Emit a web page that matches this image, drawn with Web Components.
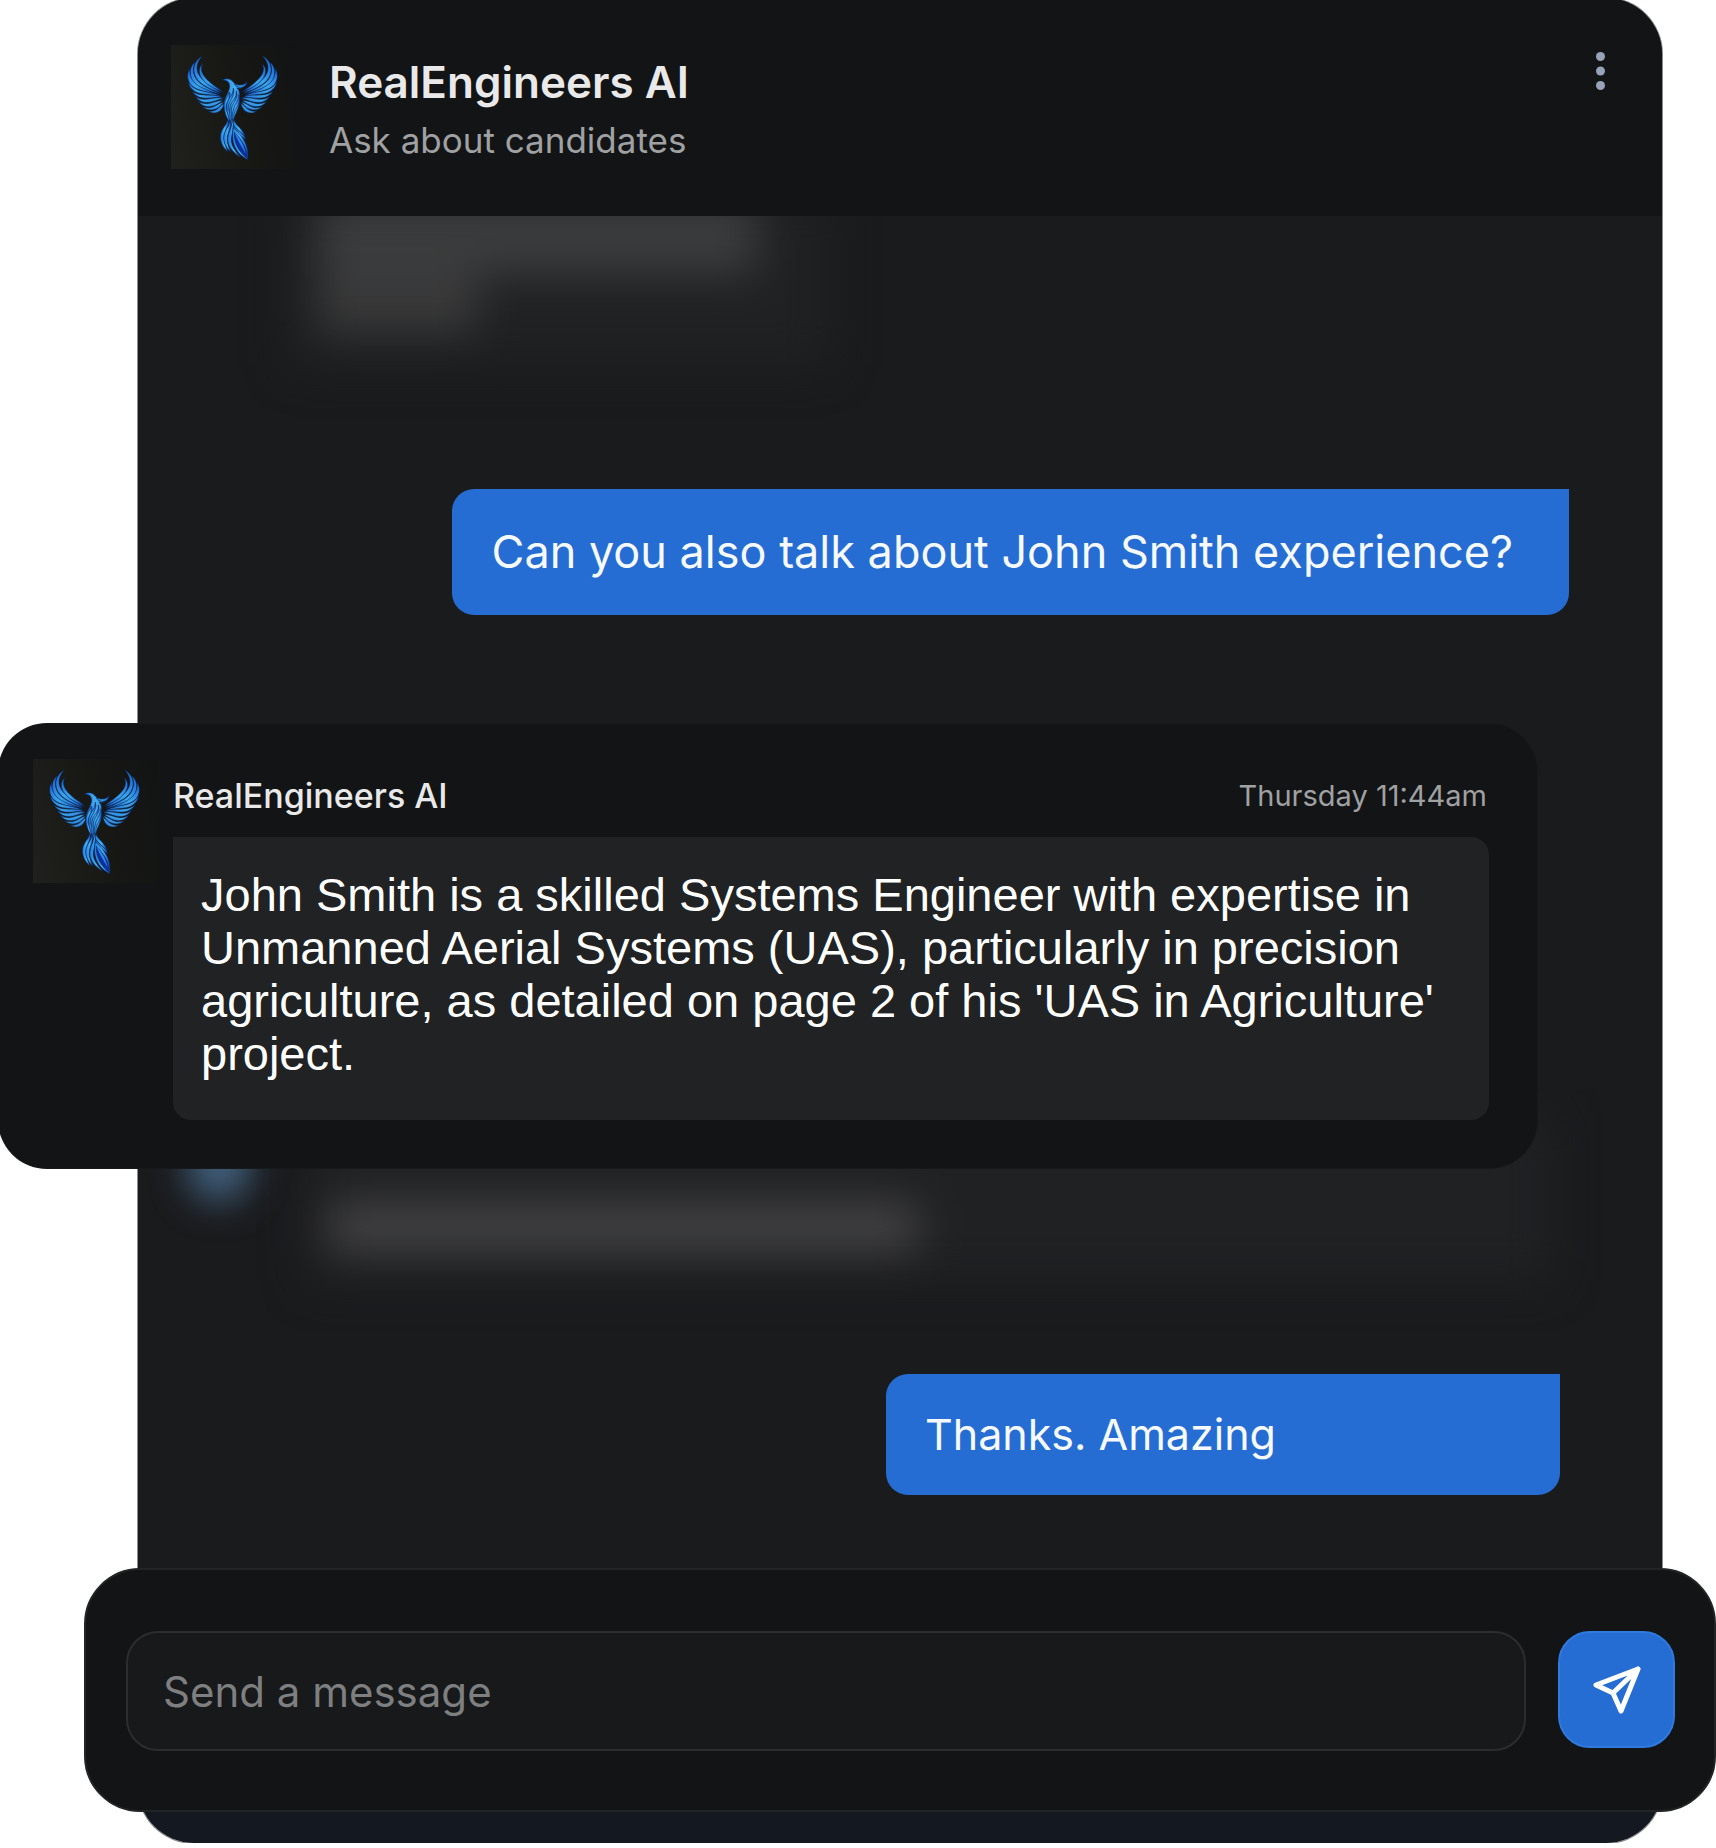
<!DOCTYPE html>
<html lang="en">
<head>
<meta charset="utf-8">
<meta name="viewport" content="width=device-width, initial-scale=1">
<title>RealEngineers AI</title>
<style>
  html { background: #fff; }
  body { margin: 0; font-family: Inter, "Liberation Sans", sans-serif; color: #e9e9ea; overflow-x: hidden; }
</style>
</head>
<body>
<chat-panel>
  <chat-header slot="header" name="RealEngineers AI" tagline="Ask about candidates"></chat-header>
  <blurred-reply></blurred-reply>
  <user-message>Can you also talk about John Smith experience?</user-message>
  <assistant-message name="RealEngineers AI" time="Thursday 11:44am">John Smith is a skilled Systems Engineer with expertise in Unmanned Aerial Systems (UAS), particularly in precision agriculture, as detailed on page 2 of his 'UAS in Agriculture' project.</assistant-message>
  <blurred-reply class="short" compact></blurred-reply>
  <user-message compact>Thanks. Amazing</user-message>
  <message-composer slot="composer"></message-composer>
</chat-panel>

<script>
const define = (name, render, setup) => customElements.define(name, class extends HTMLElement {
  connectedCallback() {
    if (this.shadowRoot) return;
    this.attachShadow({ mode: 'open' }).innerHTML = render(this);
    if (setup) setup(this);
  }
});

// Wing feathers are drawn once and mirrored around the bird's body.
define('phoenix-avatar', () => `
  <style>
    :host { display: block; flex: none; width: 124px; height: 124px; background: linear-gradient(75deg, #20201c, #171714 55%, #121414); }
    svg { display: block; width: 100%; height: 100%; }
  </style>
  <svg viewBox="33 28 372 372" role="img" aria-label="Blue phoenix">
    <defs>
      <linearGradient id="f" x1="0" y1="0" x2="1" y2="1">
        <stop offset="0" stop-color="#1b62d8"/><stop offset=".5" stop-color="#3ba4ec"/><stop offset="1" stop-color="#1a5fd6"/>
      </linearGradient>
      <linearGradient id="b" x1="0" y1="0" x2="1" y2="0">
        <stop offset="0" stop-color="#1f7be0"/><stop offset=".5" stop-color="#43aeee"/><stop offset="1" stop-color="#1557cf"/>
      </linearGradient>
      <g id="wing" fill="url(#f)" stroke="#081a3c" stroke-width="1.5">
        <path d="M128 61C108 70 97 91 103 114C110 141 143 160 187 173C158 154 125 137 114 112C107 94 113 75 128 61Z"/>
        <path d="M130 83C116 94 114 109 124 126C137 146 163 160 189 168C163 151 139 134 129 116C123 104 123 93 130 83Z" />
        <path d="M106 78C88 91 87 116 97 135C112 158 148 167 184 177C152 160 119 149 107 127C98 111 98 94 106 78Z"/>
        <path d="M89 98C79 115 82 137 94 149C112 166 144 170 174 177C146 164 115 155 101 138C91 126 88 112 89 98Z"/>
        <path d="M84 136C87 158 103 170 122 174C142 178 163 177 184 183C172 173 144 170 123 165C103 160 91 150 84 136Z"/>
        <path d="M95 165C106 183 123 188 143 188C160 187 174 184 189 187C172 175 143 180 124 177C112 175 103 171 95 165Z"/>
        <path d="M105 181C116 198 133 203 152 200C168 196 177 190 190 190C176 182 153 190 136 191C122 191 113 187 105 181Z"/>
        <path d="M114 197C127 213 144 216 160 211C175 206 181 198 191 194C175 193 157 203 142 204C131 204 123 202 114 197Z"/>
        <path d="M128 213C142 225 158 225 172 218C183 212 185 203 192 198C178 201 166 213 152 216C143 217 136 216 128 213Z"/>
        <path d="M144 227C160 236 174 232 183 223C190 215 190 208 193 202C181 209 177 219 166 224C159 227 152 228 144 227Z"/>
      </g>
    </defs>
    <use href="#wing"/>
    <use href="#wing" transform="translate(435 0) scale(-1 1)"/>
    <g fill="url(#b)" stroke="#0a1f52" stroke-width="1.8">
      <path d="M187 133C198 127 210 128 217 136C227 148 241 153 258 147C249 158 239 160 231 157C242 166 239 180 239 192C240 215 225 234 221 253L204 253C204 238 189 225 192 204C193 185 205 173 208 158C210 146 207 138 198 135Z"/>
      <path d="M222 144C239 151 254 150 261 137C262 153 245 159 229 152Z"/>
      <path d="M208 169C218 187 193 203 199 221C203 235 212 247 210 266C202 249 192 232 192 209C192 194 203 184 208 169Z"/>
      <path d="M220 158C228 181 202 198 205 218C209 235 219 248 216 270C207 249 201 233 200 214C198 193 220 181 220 158Z"/>
      <path d="M229 167C237 190 214 203 214 223C213 239 219 255 216 273C208 251 208 229 210 214C212 197 232 187 229 167Z"/>
      <path d="M237 177C244 201 230 214 225 226C220 239 222 254 219 266C214 246 217 231 222 215C227 202 237 194 237 177Z"/>
      <path d="M203 249C204 267 183 276 181 301C180 320 190 337 205 350C195 327 188 310 195 291C200 275 211 263 203 249Z"/>
      <path d="M209 253C211 271 191 285 191 306C191 322 200 338 214 350C203 330 199 314 204 296C209 279 217 266 209 253Z"/>
      <path d="M216 249C217 277 205 285 203 309C202 335 224 354 243 365C222 342 211 325 215 304C218 286 226 269 216 249Z"/>
      <path d="M222 250C222 267 248 275 256 304C244 288 223 281 219 262Z"/>
      <path d="M220 269C231 287 252 292 258 313C246 301 226 294 219 281Z"/>
      <path d="M220 276C211 318 224 350 262 372C270 337 252 303 220 276Z"/>
      <path d="M223 290C222 323 238 351 260 366C263 340 245 312 223 290Z" fill="#0b2f9e"/>
      <path d="M223 290C233 317 248 337 258 354C249 324 241 309 223 290Z" fill="#2c86ec" stroke="none"/>
    </g>
  </svg>`);

define('chat-panel', () => `
  <style>
    :host { display: block; margin: -2px 54px 0 138px; }
    .panel { display: flex; flex-direction: column; border-radius: 56px; background: linear-gradient(#1a1b1d 85%, #141820 88%); box-shadow: 0 0 0 1px #8b8c8d; padding-bottom: 31px; }
    main { display: flex; flex-direction: column; padding-bottom: 73px; }
    ::slotted(user-message) { margin-right: 93px; }
    ::slotted(user-message[compact]) { margin-right: 102px; }
    ::slotted(assistant-message) { margin: 109px 125px 0 -139px; z-index: 1; }
    ::slotted(blurred-reply.short) { margin-top: -79px; }
  </style>
  <section class="panel">
    <slot name="header"></slot>
    <main><slot></slot></main>
    <slot name="composer"></slot>
  </section>`);

define('chat-header', el => `
  <style>
    :host { display: block; }
    header { display: flex; align-items: flex-start; height: 218px; box-sizing: border-box; padding: 47px 47px 0 33px; background: #121415; border-radius: 56px 56px 0 0; }
    .titles { flex: 1; margin-left: 34px; padding-top: 9px; }
    h1 { margin: 0; font-size: 44px; line-height: 56px; font-weight: 600; }
    p { margin: 0; font-size: 35px; line-height: 60px; color: #a0a1a2; }
    button { display: block; border: 0; padding: 7px 10px; background: none; color: #98a2b8; }
    svg { display: block; width: 9px; height: 38px; }
  </style>
  <header>
    <phoenix-avatar></phoenix-avatar>
    <div class="titles"><h1>${el.getAttribute('name')}</h1><p>${el.getAttribute('tagline')}</p></div>
    <button type="button" aria-label="More options">
      <svg viewBox="0 0 9 38" fill="currentColor"><circle cx="4.5" cy="4.5" r="4.5"/><circle cx="4.5" cy="19" r="4.5"/><circle cx="4.5" cy="33.5" r="4.5"/></svg>
    </button>
  </header>`);

define('user-message', () => `
  <style>
    :host { display: block; align-self: flex-end; box-sizing: border-box; padding: 32px 56px 32px 40px; border-radius: 22px 0 22px 22px; background: #256dd3; color: #f6faff; font-size: 45px; line-height: 62px; }
    :host([compact]) { min-width: 674px; padding: 30px 39px; font-size: 43px; line-height: 61px; }
  </style>
  <slot></slot>`);

define('assistant-message', el => `
  <style>
    :host { display: block; }
    article { display: flex; gap: 16px; padding: 35px 48px 48px 34px; border-radius: 48px; background: #121415; box-shadow: 0 0 0 1px #17191a; }
    .body { flex: 1; }
    header { display: flex; align-items: center; justify-content: space-between; height: 78px; box-sizing: border-box; padding-bottom: 4px; }
    h2 { margin: 0; font-size: 34px; line-height: 42px; font-weight: 500; }
    time { font-size: 29px; line-height: 42px; color: #a0a1a2; padding-right: 2px; }
    p { margin: 0; padding: 31px 28px 40px; border-radius: 0 18px 18px 18px; background: #202224; color: #fff; font: 47px/53px "Liberation Sans", Arial, sans-serif; }
  </style>
  <article>
    <phoenix-avatar></phoenix-avatar>
    <div class="body">
      <header><h2>${el.getAttribute('name')}</h2><time>${el.getAttribute('time')}</time></header>
      <p><slot></slot></p>
    </div>
  </article>`);

// Older replies, out of focus behind the current exchange.
define('blurred-reply', () => `
  <style>
    :host { display: block; height: 273px; overflow: hidden; }
    :host([compact]) { height: 285px; }
    .bubble { width: 540px; height: 170px; margin: -20px 0 0 152px; padding: 0 0 0 28px; box-sizing: border-box; background: #1f2122; filter: blur(22px); }
    .line { width: 440px; height: 78px; background: #3b3c3d; }
    .line + .line { width: 160px; height: 58px; background: #39393a; }
    .row { display: none; }
    :host([compact]) .row { display: flex; gap: 58px; padding: 24px 110px 0 50px; }
    :host([compact]) .wide { display: none; }
    .dot { flex: none; width: 62px; height: 86px; border-radius: 30px; background: #42617f; filter: blur(18px); margin-top: 2px; }
    .row .bubble { flex: 1; width: auto; height: 168px; margin: 0; padding: 90px 28px 0; background: #202123; }
    .row .line { width: 590px; height: 48px; margin-left: -8px; background: #434344; }
  </style>
  <div class="bubble wide"><div class="line"></div><div class="line"></div></div>
  <div class="row"><div class="dot"></div><div class="bubble"><div class="line"></div></div></div>`);

define('message-composer', () => `
  <style>
    :host { display: block; margin: 0 -54px; z-index: 1; }
    form { display: flex; align-items: flex-start; gap: 32px; padding: 61px 39px 59px 40px; border: 2px solid #222425; border-radius: 56px; background: #121415; }
    input { flex: 1; min-width: 0; height: 120px; box-sizing: border-box; margin: 0; padding: 0 35px; border: 2px solid #2b2d2e; border-radius: 32px; background: #17191a; color: #e9e9ea; font: 42px/60px Inter, sans-serif; outline: 0; }
    input::placeholder { color: #7e7f80; opacity: 1; }
    button { flex: none; display: grid; place-items: center; width: 117px; height: 117px; padding: 0; border: 2px solid #2f7ade; border-radius: 32px; background: #256dd3; color: #fff; }
    svg { display: block; width: 48px; height: 48px; }
  </style>
  <form>
    <input type="text" placeholder="Send a message" aria-label="Send a message">
    <button type="submit" aria-label="Send">
      <svg viewBox="0 0 48 48" fill="none" stroke="currentColor" stroke-width="5" stroke-linecap="round" stroke-linejoin="round"><path d="M45 3 3 19 20 27 28 45ZM45 3 20 27"/></svg>
    </button>
  </form>`, el => el.shadowRoot.querySelector('form').addEventListener('submit', e => e.preventDefault()));
</script>
</body>
</html>
